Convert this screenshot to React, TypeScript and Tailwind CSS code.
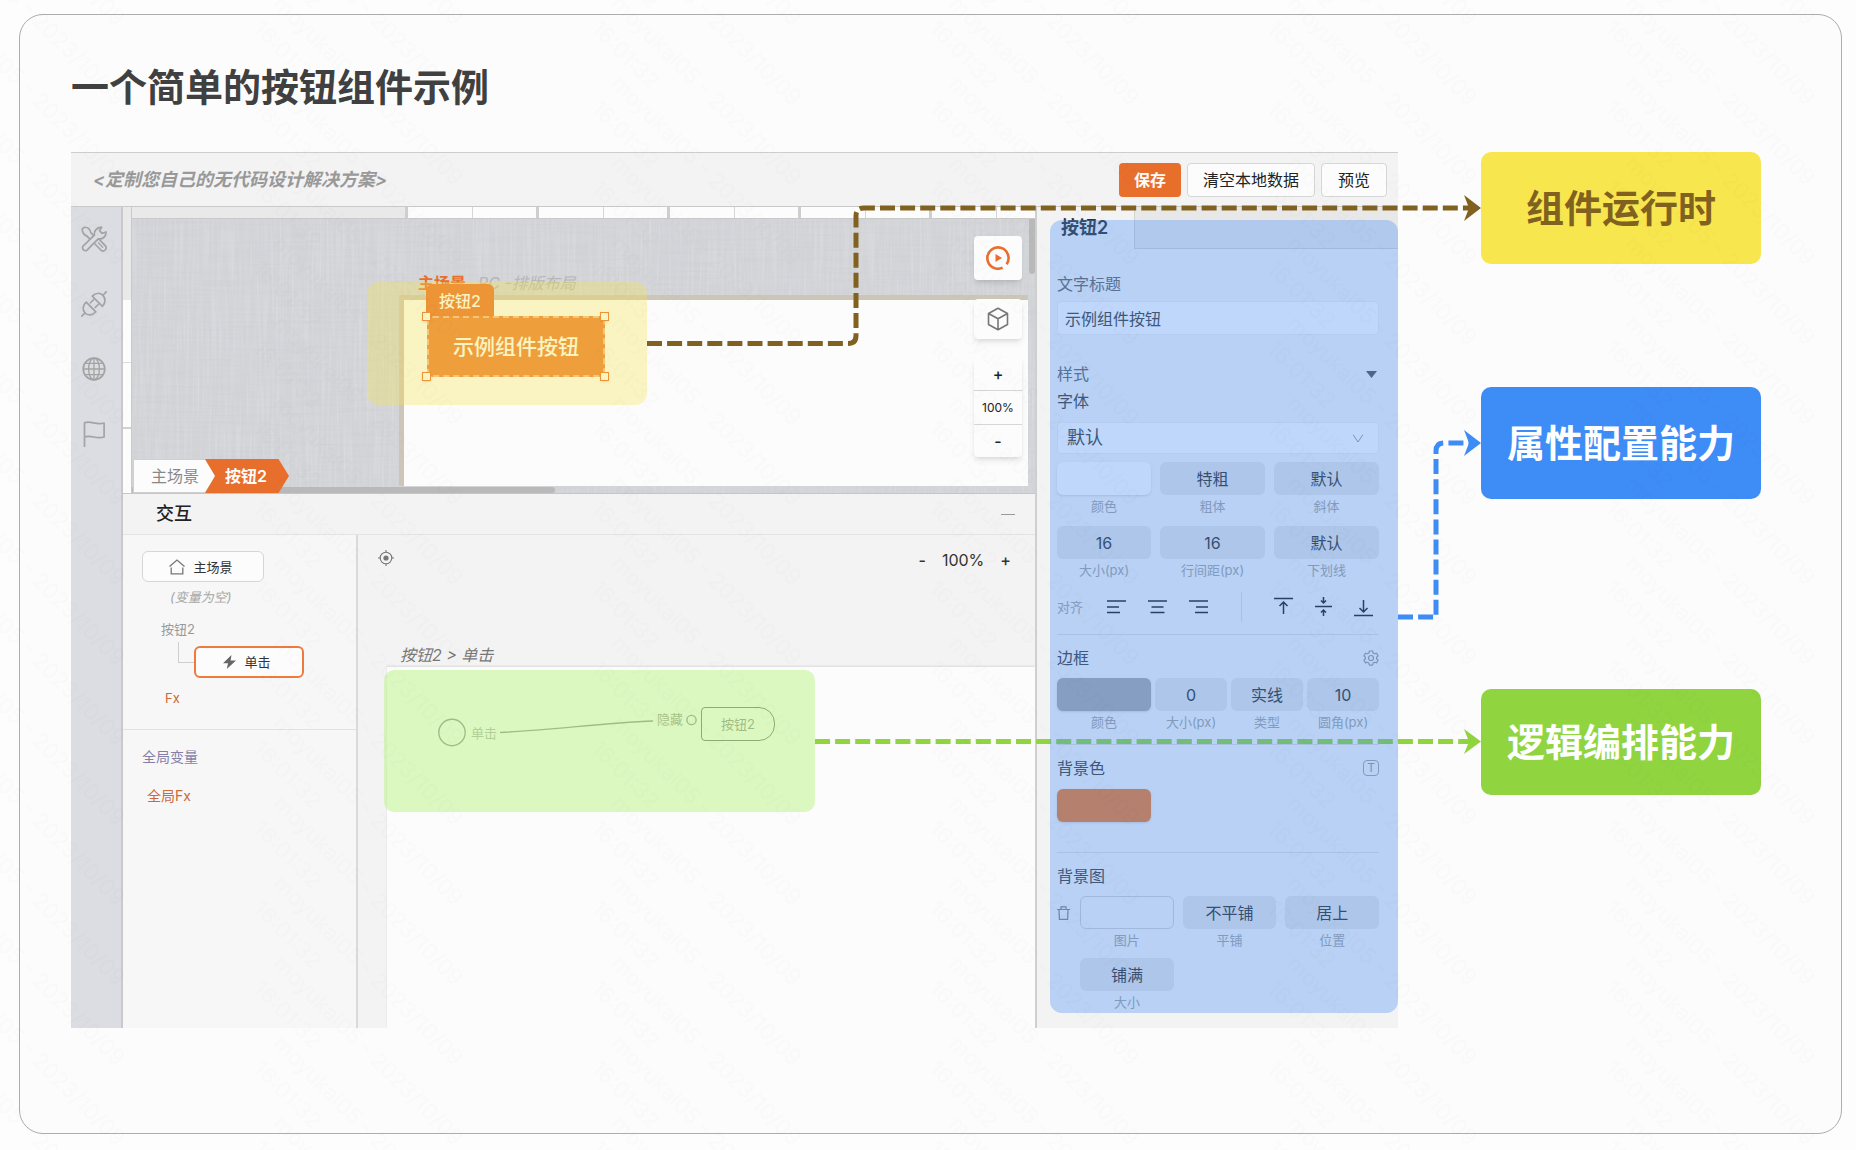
import { useState } from 'react';
import type { ReactNode } from 'react';

const RULER_CELLS = [0, 1, 2, 3, 4];

function Watermark() {
  const offsets = [-240, -160, -80, 0, 80];

  return (
    <svg className="pointer-events-none absolute inset-0 z-30 h-full w-full" aria-hidden="true">
      <defs>
        <pattern id="watermark" x="248" y="0" width="338" height="80" patternUnits="userSpaceOnUse">
          <g fill="#000" fillOpacity="0.012" fontSize="22" fontFamily="Inter, sans-serif">
            {offsets.map((y) => (
              <g key={y} transform={`translate(0 ${y})`}>
                <text transform="translate(24 5) rotate(45)">moyukai05 - 2023/10/09</text>
                <text transform="translate(4 30) rotate(45)">16:01:32</text>
              </g>
            ))}
          </g>
        </pattern>
      </defs>
      <rect width="100%" height="100%" fill="url(#watermark)" />
    </svg>
  );
}

function LinenTexture() {
  return (
    <svg className="absolute inset-0 h-full w-full" aria-hidden="true">
      <filter id="weft">
        <feTurbulence type="fractalNoise" baseFrequency="0.015 0.4" numOctaves="2" seed="3" />
        <feColorMatrix values="0 0 0 0 0.45  0 0 0 0 0.45  0 0 0 0 0.5  1.2 0 0 0 -0.5" />
      </filter>
      <filter id="warp">
        <feTurbulence type="fractalNoise" baseFrequency="0.4 0.015" numOctaves="2" seed="8" />
        <feColorMatrix values="0 0 0 0 1  0 0 0 0 1  0 0 0 0 1  1.2 0 0 0 -0.5" />
      </filter>
      <rect width="100%" height="100%" filter="url(#weft)" opacity="0.2" />
      <rect width="100%" height="100%" filter="url(#warp)" opacity="0.3" />
    </svg>
  );
}

function ToolsIcon() {
  return (
    <svg width="26" height="26" viewBox="0 0 26 26" fill="none" stroke="#a3a3a3" strokeWidth="1.7" strokeLinejoin="round" strokeLinecap="round">
      <path d="M1.8 20.4 13.4 9.2C12.6 5.4 15.4 1.4 20.6 1.2L18.6 4.6l2.4 2.8 4-1.4c.2 4.8-3.6 7.6-7.8 6.8L6 24.2a3 3 0 0 1-4.2-3.8z" />
      <path d="M8.8 13.2 6.4 10.4C3 9.4 1 6 1.3 3.2l2-1.9C6.4 1 9 3 9.8 6.6l2.6 2.8" />
      <path d="m18.2 13.4 6 6.2a3.1 3.1 0 0 1-4.4 4.4l-5.8-6" />
      <path d="m17.4 16.8 4.4 4.6" strokeWidth="1.3" />
    </svg>
  );
}

function PlugIcon() {
  return (
    <svg width="26" height="26" viewBox="0 0 26 26" fill="none" stroke="#a3a3a3" strokeWidth="1.7" strokeLinejoin="round" strokeLinecap="round">
      <path d="M11.2 5.2 21.4 15.4c3.4-3.4 3.2-8 .6-11-3-2.8-7.4-2.6-10.8.8z" />
      <path d="m22.2 4 3-3.2" />
      <path d="M5.2 11.2c-3.6 3.2-4 7.8-1.2 10.8 3 2.8 7.6 2.4 10.8-1.2z" />
      <path d="m3.8 22.2-3 3" />
      <path d="m12.6 8.6-3.4 3.4M17.4 13.4l-3.4 3.4" strokeWidth="1.5" />
    </svg>
  );
}

function GlobeIcon() {
  return (
    <svg width="26" height="26" viewBox="0 0 26 26" fill="none" stroke="#a3a3a3" strokeWidth="1.3">
      <circle cx="13" cy="13" r="10.8" strokeWidth="1.7" />
      <ellipse cx="13" cy="13" rx="5.4" ry="10.8" />
      <path d="M13 2v22M2 13h22M4.2 7.3h17.6M4.2 18.7h17.6" />
    </svg>
  );
}

function FlagIcon() {
  return (
    <svg width="26" height="26" viewBox="0 0 26 26" fill="none" stroke="#a3a3a3" strokeWidth="1.7" strokeLinejoin="round">
      <path d="M3.5 26V1.8c6.5-2.6 11.5 2.8 19.6.2v14c-7.6 2.6-13-2.6-19.6 0" />
    </svg>
  );
}

function GearIcon() {
  return (
    <svg width="16" height="16" viewBox="0 0 16 16" fill="none" stroke="#999" strokeWidth="1.2" strokeLinejoin="round">
      <path d="M6.4 1h3.2l.5 2 1.4.8 2-.6 1.6 2.7-1.5 1.4v1.5l1.5 1.4-1.6 2.7-2-.6-1.4.8-.5 2H6.4l-.5-2-1.400-.8-2 .6L.9 10.200l1.500-1.400V7.300L.9 5.900l1.600-2.700 2 .6L5.900 3z" />
      <circle cx="8" cy="8" r="2.5" />
    </svg>
  );
}

const SIDE_TOOLS = [
  { name: '工具', icon: <ToolsIcon /> },
  { name: '连接', icon: <PlugIcon /> },
  { name: '网络', icon: <GlobeIcon /> },
  { name: '标记', icon: <FlagIcon /> },
];

const ALIGN_ICONS = [
  { name: '左对齐', d: 'M0 4h19M0 10h12M0 15.5h13' },
  { name: '水平居中', d: 'M0 4h19M3.5 10h12M2.5 15.5h14' },
  { name: '右对齐', d: 'M0 4h19M7 10h12M6 15.5h13' },
];

const VALIGN_ICONS = [
  { name: '顶对齐', d: 'M0 1.5h19M9.5 17V5M5.5 9l4-4 4 4' },
  { name: '垂直居中', d: 'M1 9.5h17M9.5 0v6M7 3.5l2.5 2.5L12 3.5M9.5 19v-6M7 15.5 9.5 13l2.5 2.5' },
  { name: '底对齐', d: 'M0 18.5h19M9.5 3v12M5.5 11l4 4 4-4' },
];

interface FieldProps {
  id: string;
  label: string;
  className: string;
  children?: ReactNode;
  tone?: 'plain' | 'white' | 'gray' | 'outline';
}

function Field({ id, label, className, children, tone = 'plain' }: FieldProps) {
  const tones = {
    plain: 'bg-[#e3e3e3]',
    white: 'bg-[#fcfcfc] shadow-sm',
    gray: 'bg-[#a8a8a8] shadow-sm',
    outline: 'border border-[#cfcfcf]',
  };

  return (
    <div className={`flex flex-col ${className}`}>
      <button id={id} className={`h-[33px] rounded-md text-base leading-6 text-[#333] ${tones[tone]}`}>
        {children}
      </button>
      <label htmlFor={id} className="text-center text-[13px] leading-[22px] text-[#a3a3a3]">
        {label}
      </label>
    </div>
  );
}

function StyleIcon({ name, d }: { name: string; d: string }) {
  return (
    <button aria-label={name}>
      <svg width="19" height="20" viewBox="0 0 19 20" fill="none" stroke="#1f1f1f" strokeWidth="1.5">
        <path d={d} />
      </svg>
    </button>
  );
}

function PropertyPanel() {
  const [title, setTitle] = useState('示例组件按钮');

  return (
    <aside className="relative w-[363px] shrink-0 border-l-2 border-[#cfcfcf] pb-[15px]">
      <div className="flex h-[42px]">
        <div className="w-[97px] pl-6 pt-[9px] text-lg font-semibold leading-6 text-[#333]">按钮2</div>
        <div className="flex-1 border-b border-l border-[#d2d2d2] bg-[#e8e8e8]"></div>
      </div>

      <div className="pl-5 pr-[19px] text-base leading-6 text-[#404040]">
        <label htmlFor="title" className="mt-[23px] block text-[#666]">文字标题</label>
        <input
          id="title"
          value={title}
          onChange={(e) => setTitle(e.target.value)}
          className="mt-[5px] block h-[34px] w-full rounded border border-[#ececec] bg-[#fcfcfc] px-[7px]"
        />

        <div className="mt-[27px] flex items-center justify-between text-[#666]">
          <span>样式</span>
          <svg className="mr-0.5" width="11" height="7" viewBox="0 0 11 7">
            <path d="M0 0h11L5.5 7z" fill="#555" />
          </svg>
        </div>
        <label htmlFor="font" className="mt-[3px] block">字体</label>
        <div className="relative mt-[9px]">
          <select id="font" className="block h-8 w-full appearance-none rounded-sm border border-[#ececec] bg-[#fcfcfc] px-[9px] text-lg leading-6">
            <option>默认</option>
          </select>
          <svg className="pointer-events-none absolute right-4 top-3" width="10" height="9" viewBox="0 0 10 9" fill="none" stroke="#999">
            <path d="m0 .5 5 7.5 5-7.5" />
          </svg>
        </div>

        <div className="mt-2 flex gap-[9px]">
          <Field id="font-color" label="颜色" tone="white" className="w-[94px]" />
          <Field id="font-weight" label="粗体" className="flex-1">特粗</Field>
          <Field id="font-italic" label="斜体" className="flex-1">默认</Field>
        </div>
        <div className="mt-[9px] flex gap-[9px]">
          <Field id="font-size" label="大小(px)" className="w-[94px]">16</Field>
          <Field id="line-height" label="行间距(px)" className="flex-1">16</Field>
          <Field id="underline" label="下划线" className="flex-1">默认</Field>
        </div>

        <div className="mt-[11px] flex h-[30px] items-center justify-between pr-[6px]">
          <span className="text-[13px] text-[#a3a3a3]">对齐</span>
          <div className="flex gap-[22px]">
            {ALIGN_ICONS.map((icon) => (
              <StyleIcon key={icon.name} {...icon} />
            ))}
          </div>
          <div className="ml-2 h-full w-px bg-[#dcdcdc]"></div>
          <div className="ml-2 flex gap-[21px]">
            {VALIGN_ICONS.map((icon) => (
              <StyleIcon key={icon.name} {...icon} />
            ))}
          </div>
        </div>

        <div className="mt-3 flex items-center justify-between border-t border-[#dcdcdc] pt-[11px]">
          <span>边框</span>
          <button aria-label="边框设置"><GearIcon /></button>
        </div>
        <div className="mt-2 flex gap-1">
          <Field id="border-color" label="颜色" tone="gray" className="w-[94px]" />
          <Field id="border-size" label="大小(px)" className="flex-1">0</Field>
          <Field id="border-type" label="类型" className="flex-1">实线</Field>
          <Field id="border-radius" label="圆角(px)" className="flex-1">10</Field>
        </div>

        <div className="mt-[11px] flex items-center justify-between border-t border-[#dcdcdc] pt-[11px]">
          <span>背景色</span>
          <span className="flex h-4 w-4 items-center justify-center rounded-sm border border-[#a3a3a3] text-xs leading-none text-[#999]">T</span>
        </div>
        <button aria-label="背景色" className="mt-[9px] block h-[33px] w-[94px] rounded-md bg-[#f07c30] shadow-sm"></button>

        <div className="mt-[30px] border-t border-[#dcdcdc] pt-[11px]">背景图</div>
        <div className="mt-2 flex">
          <button aria-label="删除背景图" className="mr-[10px] flex h-[33px] w-[13px] items-center">
            <svg width="13" height="14" viewBox="0 0 13 14" fill="none" stroke="#858585" strokeWidth="1.2">
              <path d="M0 3.5h13M4 3.5V.8h5v2.7M2 3.5l.4 9.8h8.2l.4-9.8" />
            </svg>
          </button>
          <div className="flex flex-1 gap-[9px]">
            <Field id="bg-image" label="图片" tone="outline" className="flex-1" />
            <Field id="bg-repeat" label="平铺" className="flex-1">不平铺</Field>
            <Field id="bg-position" label="位置" className="flex-1">居上</Field>
          </div>
        </div>
        <div className="mt-[7px] flex pl-[23px]">
          <Field id="bg-size" label="大小" className="w-[94px]">铺满</Field>
        </div>
      </div>

      <div className="pointer-events-none absolute bottom-[15px] left-[13px] right-0 top-[13px] z-20 rounded-xl bg-[#3c8af5]/32"></div>
    </aside>
  );
}

function Stage() {
  return (
    <div className="flex border-b border-[#c6c6c6]">
      {/* vertical ruler */}
      <div className="w-[9px] border-r border-[#c9c9c9] bg-[#fcfcfc]">
        <div className="h-[93px] bg-[#e9e9e9]"></div>
        <div className="h-[63px] border-b border-[#ddd]"></div>
        <div className="h-[66px] border-b-2 border-[#d0d0d0]"></div>
      </div>

      <div className="min-w-0 flex-1">
        <div className="flex h-3 overflow-hidden border-b border-[#c9c9c9] bg-[#fcfcfc]">
          <div className="w-[273px] shrink-0 bg-[#e9e9e9]"></div>
          {RULER_CELLS.map((cell) => (
            <div key={cell} className="flex w-[131px] shrink-0 border-l-[3px] border-[#cfcfcf]">
              <div className="w-[65px] border-r border-[#d6d6d6]"></div>
            </div>
          ))}
        </div>

        <div className="relative h-[274px] overflow-hidden bg-[#d3d4d8]">
          <LinenTexture />
          <div className="absolute left-[286px] top-[54px] flex gap-3 whitespace-nowrap text-base leading-5">
            <span className="font-semibold text-[#e86e2c]">主场景</span>
            <span className="italic text-[#b6b6b6]">PC -排版布局</span>
          </div>
          <div className="absolute bottom-[7px] left-[267px] right-[7px] top-[76px] border-l-[5px] border-t-[5px] border-[#cec5b9] bg-[#fcfcfc]"></div>

          <div className="absolute left-[294px] top-[65px] flex h-[33px] w-[68px] items-center justify-center rounded-t-md bg-[#e86e2c] text-base font-medium text-[#fcfcfc]">
            按钮2
          </div>
          <button className="absolute left-[295px] top-[97px] h-[61px] w-[178px] rounded-md border-2 border-dashed border-[#f2b98f] bg-[#eb7e35] text-[21px] font-medium leading-6 text-[#fcfcfc]">
            示例组件按钮
          </button>
          <i className="absolute left-[290px] top-[93px] h-[9px] w-[9px] border border-[#e86e2c] bg-[#fcfcfc] shadow"></i>
          <i className="absolute left-[468px] top-[93px] h-[9px] w-[9px] border border-[#e86e2c] bg-[#fcfcfc] shadow"></i>
          <i className="absolute left-[290px] top-[153px] h-[9px] w-[9px] border border-[#e86e2c] bg-[#fcfcfc] shadow"></i>
          <i className="absolute left-[468px] top-[153px] h-[9px] w-[9px] border border-[#e86e2c] bg-[#fcfcfc] shadow"></i>
          <div className="pointer-events-none absolute left-[235px] top-[63px] h-[123px] w-[280px] rounded-xl bg-[#f7e54b]/33"></div>

          {/* scrollbars */}
          <div className="absolute right-0 top-0 h-[55px] w-[6px] rounded-b bg-[#b9b9b9]"></div>
          <div className="absolute bottom-0 left-0 h-[6px] w-[423px] rounded-r bg-[#b9b9b9]"></div>

          <nav className="absolute bottom-0 left-px flex h-[34px] items-center text-base leading-6">
            <svg className="absolute left-0 top-0" width="157" height="34" viewBox="0 0 157 34">
              <path d="M.5.5h72L83 17 72.5 33.5H.5z" fill="#fcfcfc" stroke="#d0d0d0" />
              <path d="M72 0h73.5L156 17l-10.5 17H72l10-17z" fill="#e86e2c" />
            </svg>
            <a href="#scene" className="relative pl-[18px] text-[#888]">主场景</a>
            <a href="#button" className="relative pl-[26px] font-semibold text-[#fcfcfc]">按钮2</a>
          </nav>

          <div className="absolute right-[13px] top-[17px] flex w-12 flex-col text-[#222]">
            <button aria-label="运行" className="flex h-11 items-center justify-center rounded bg-[#fcfcfc] shadow-md">
              <svg width="24" height="24" viewBox="0 0 24 24" fill="none" stroke="#e86e2c" strokeWidth="2.6">
                <path d="M16.6 21.6A10.6 10.6 0 1 1 20.6 18.2" />
                <path d="M9.5 8v8l6.5-4z" fill="#e86e2c" stroke="none" />
              </svg>
            </button>
            <button aria-label="组件" className="mt-[19px] flex h-10 items-center justify-center rounded bg-[#fcfcfc] shadow-md">
              <svg width="22" height="24" viewBox="0 0 22 24" fill="none" stroke="#777" strokeWidth="1.6" strokeLinejoin="round">
                <path d="M11 1.2 20.5 6.5v11L11 22.8 1.5 17.5v-11zM1.5 6.5 11 11.8l9.5-5.3M11 11.8v11" />
              </svg>
            </button>
            <div className="mt-[18px] flex flex-col rounded bg-[#fcfcfc] shadow-md">
              <button className="h-[34px] border-b border-[#d6d6d6] text-base font-medium">+</button>
              <span className="flex h-[33px] items-center justify-center text-xs">100%</span>
              <button className="h-[33px] border-t border-[#d6d6d6] text-base font-medium">-</button>
            </div>
          </div>
        </div>
      </div>
    </div>
  );
}

function EventTree() {
  return (
    <div className="w-[235px] shrink-0 border-r-2 border-[#dadada] bg-[#f7f7f7] px-[19px] pt-4 text-[13px] leading-5">
      <button className="flex h-[31px] w-[122px] items-center justify-center rounded-md border border-[#d6d6d6] bg-[#fcfcfc] pr-1 text-[#333]">
        <svg className="mr-2" width="16" height="16" viewBox="0 0 16 16" fill="none" stroke="#777" strokeWidth="1.3">
          <path d="M.5 7.5 8 1l7.5 6.5M2.2 8.5v6.3h11.6V8.5" />
        </svg>
        主场景
      </button>
      <p className="mt-[5px] pl-7 italic text-[#a6a6a6]">(变量为空)</p>
      <p className="mt-3 pl-[19px] text-[#999]">按钮2</p>
      <div className="mt-[3px] flex pl-9">
        <div className="h-[21px] w-4 border-b border-l border-[#cfcfcf]"></div>
        <button className="mt-1 flex h-8 w-[110px] items-center justify-center rounded-md border-2 border-[#ee7a3d] bg-[#fcfcfc] pr-1 text-[#333]">
          <svg className="mr-2" width="13" height="14" viewBox="0 0 13 14" fill="#666">
            <path d="M8.5 0 0 8.2h5L3.8 14 13 5.4H7.600z" />
          </svg>
          单击
        </button>
      </div>
      <p className="mt-[10px] pl-[23px] text-[#c96a3c]">Fx</p>
      <div className="-mx-[19px] mt-[21px] h-px bg-[#e2e2e2]"></div>
      <p className="mt-[17px] text-sm leading-5 text-[#857fa8]">全局变量</p>
      <p className="mt-[19px] pl-[5px] text-sm leading-5 text-[#c96a3c]">全局Fx</p>
    </div>
  );
}

function LogicCanvas() {
  return (
    <div className="flex min-w-0 flex-1 flex-col">
      <div className="flex h-[46px] items-center justify-between pl-5 pr-6 text-base leading-6 text-[#333]">
        <button aria-label="定位">
          <svg width="16" height="16" viewBox="0 0 16 16" fill="none" stroke="#777" strokeWidth="1.1">
            <circle cx="8" cy="8" r="5.8" />
            <circle cx="8" cy="8" r="2.6" fill="#777" stroke="none" />
            <path d="M8 0v2.5M8 13.5V16M0 8h2.5M13.5 8H16" />
          </svg>
        </button>
        <div className="flex items-center gap-4 pt-1">
          <button className="font-medium">-</button>
          <span>100%</span>
          <button className="font-medium">+</button>
        </div>
      </div>
      <p className="mt-[62px] pl-[42px] text-base italic leading-6 text-[#777]">按钮2 &gt; 单击</p>

      <div className="relative ml-[29px] flex-1 bg-[#fcfcfc] text-[13px] leading-5 shadow-[0_-1px_2px_#0000001a]">
        <svg className="absolute left-0 top-0" width="400" height="100" viewBox="0 0 400 100" fill="none" stroke="#919191" strokeWidth="1.4">
          <circle cx="65" cy="65.5" r="13.2" />
          <circle cx="304.5" cy="53" r="4.6" />
          <path d="M113 65.5C165 63 215 56 266 54" />
        </svg>
        <span className="absolute left-[84px] top-[56px] text-[#b0b0b0]">单击</span>
        <span className="absolute left-[270px] top-[42px] text-[#999]">隐藏</span>
        <button className="absolute left-[314px] top-[40px] h-[34px] w-[74px] rounded-l rounded-r-2xl border border-[#707070] text-[#8c8c8c]">
          按钮2
        </button>
        <div className="pointer-events-none absolute left-[-3px] top-[3px] h-[142px] w-[431px] rounded-[10px] bg-[#b6f57b]/45"></div>
      </div>
    </div>
  );
}

function Editor() {
  return (
    <section className="flex min-w-0 flex-1 flex-col border-t border-[#cdcdcd] bg-[#f3f3f3]">
      <header className="flex h-[54px] items-center justify-between border-b border-[#c9c9c9] pl-[22px] pr-[11px]">
        <p className="text-lg font-semibold italic text-[#999]">&lt;定制您自己的无代码设计解决方案&gt;</p>
        <div className="flex gap-[6px] text-base leading-6">
          <button className="h-[34px] rounded bg-[#e86e2c] px-[15px] font-semibold text-[#fcfcfc]">保存</button>
          <button className="h-[34px] rounded border border-[#d6d6d6] bg-[#fcfcfc] px-[15px] text-[#222]">清空本地数据</button>
          <button className="h-[34px] rounded border border-[#d6d6d6] bg-[#fcfcfc] px-4 text-[#222]">预览</button>
        </div>
      </header>

      <div className="flex flex-1">
        <nav className="flex w-[52px] shrink-0 flex-col items-center gap-[39px] border-r-2 border-[#c9c9cb] bg-[#dcdde2] pr-[5px] pt-[19px]">
          {SIDE_TOOLS.map((tool) => (
            <button key={tool.name} aria-label={tool.name}>{tool.icon}</button>
          ))}
        </nav>

        <div className="flex min-w-0 flex-1 flex-col">
          <Stage />
          <div className="flex h-[41px] items-center justify-between border-b border-[#e4e4e4] pl-[33px] pr-5">
            <h2 className="text-lg font-medium leading-6 text-[#222]">交互</h2>
            <button aria-label="收起" className="h-px w-[14px] bg-[#999]"></button>
          </div>
          <div className="flex flex-1">
            <EventTree />
            <LogicCanvas />
          </div>
        </div>

        <PropertyPanel />
      </div>
    </section>
  );
}

function Connectors() {
  return (
    <svg className="pointer-events-none absolute inset-0 z-10 h-full w-full overflow-visible" aria-hidden="true">
      <g fill="none" strokeWidth="5" strokeDasharray="15 5.1">
        <path d="M576 191.5H777q8 0 8-8V64q0-8 8-8H1398" stroke="#80611f" />
        <path d="M1327 465h38V299q0-8 8-8h26" stroke="#3e8cf6" />
        <path d="M744 589.500H1400" stroke="#90d440" />
      </g>
      <path d="M1393 43 1410 56 1393 69 1398 56z" fill="#80611f" />
      <path d="M1393 278 1410 291 1393 304 1398 291z" fill="#3e8cf6" />
      <path d="M1393 577 1410 589.500 1393 602 1398 589.500z" fill="#90d440" />
    </svg>
  );
}

export default function App() {
  return (
    <div className="relative flex min-h-screen bg-[#fdfdfd] pb-4 pl-[19px] pr-[14px] pt-[14px] font-[Inter,'Noto_Sans_CJK_SC',sans-serif]">
      <main className="min-w-0 flex-1 rounded-3xl border border-[#adadad] bg-[#fcfcfc] pb-[105px] pl-[51px] pr-20 pt-12">
        <h1 className="text-[38px] font-semibold leading-[48px] text-[#404040]">一个简单的按钮组件示例</h1>

        <div className="relative mt-[41px] flex">
          <Editor />
          <div className="ml-[83px] w-[280px] shrink-0 text-center text-[38px] font-semibold text-white">
            <div className="rounded-[10px] bg-[#f8e64e] leading-[112px] text-[#80611f]">组件运行时</div>
            <div className="mt-[123px] rounded-[10px] bg-[#3e8cf6] leading-[112px]">属性配置能力</div>
            <div className="mt-[190px] rounded-[10px] bg-[#90d440] leading-[106px]">逻辑编排能力</div>
          </div>
          <Connectors />
        </div>
      </main>
      <Watermark />
    </div>
  );
}
